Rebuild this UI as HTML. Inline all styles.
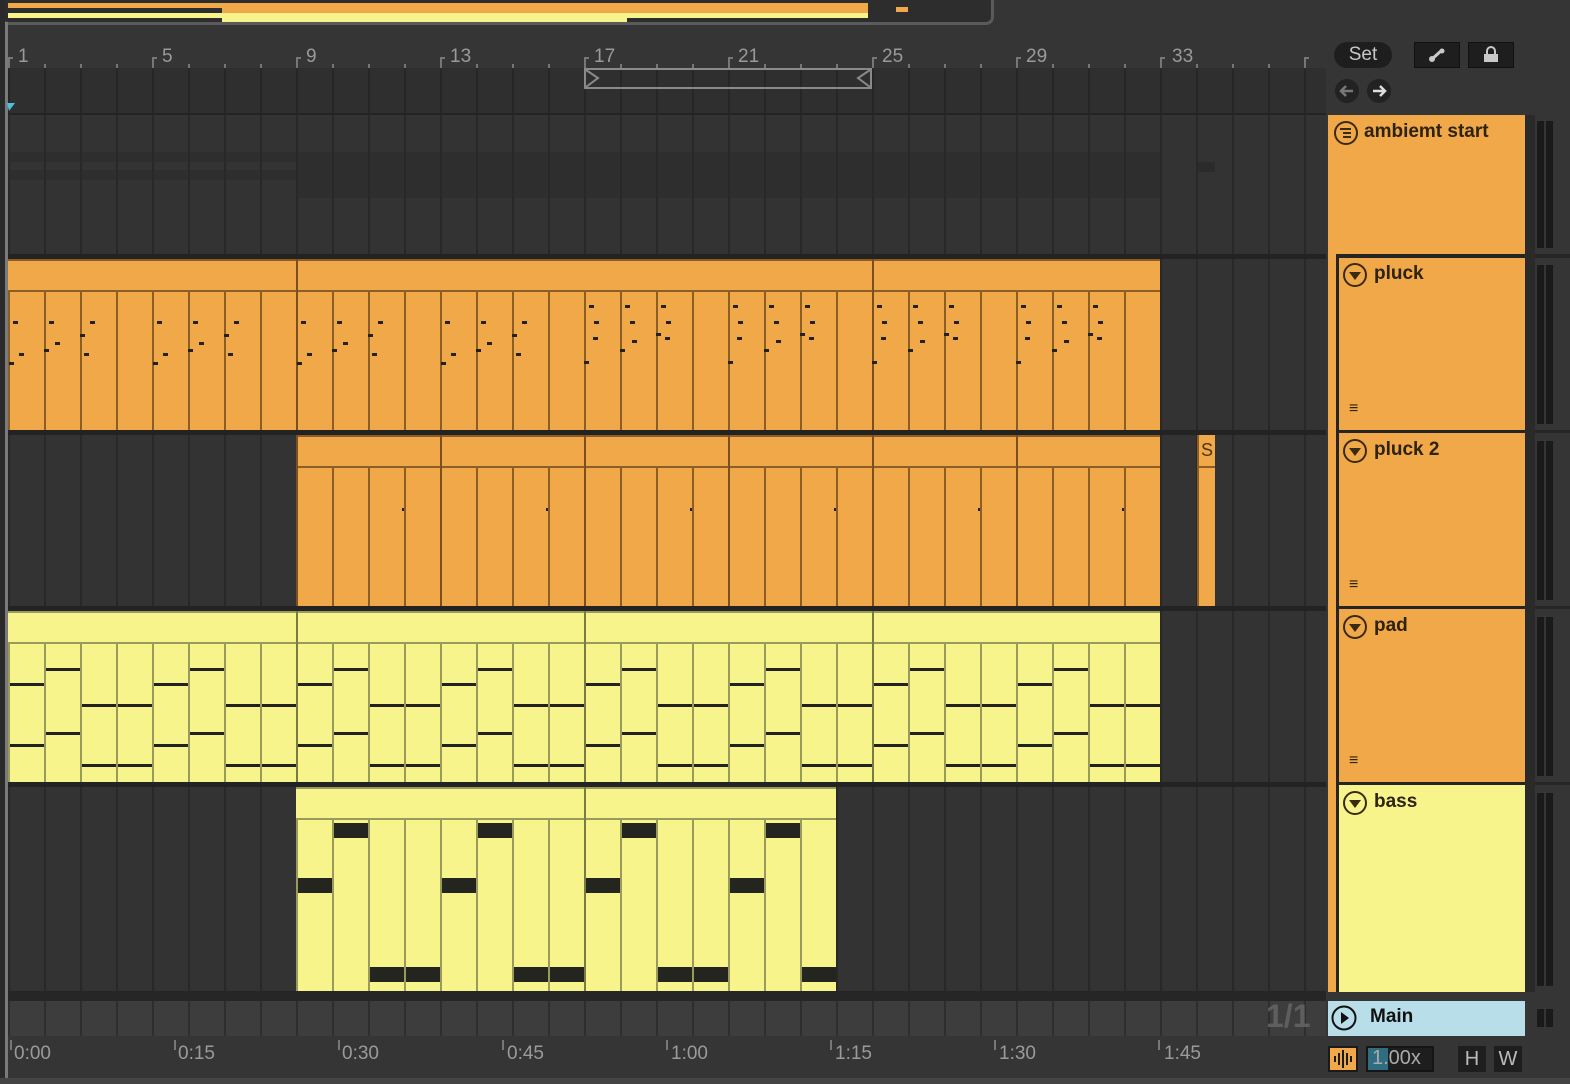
<!DOCTYPE html>
<html><head><meta charset="utf-8"><style>
*{margin:0;padding:0;box-sizing:border-box}
body{width:1570px;height:1084px;background:#353535;position:relative;overflow:hidden;font-family:"Liberation Sans",sans-serif}
.a{position:absolute}
.t{position:absolute;font-size:19px;color:#9a9a9a}
.hd{position:absolute;font-weight:bold;font-size:19px;color:#2e2210}
.ic{position:absolute;width:24px;height:24px;border:2px solid #3a2a10;border-radius:50%}
</style></head><body>
<div id="root"></div>
<div class="a" style="left:0;top:0;width:994px;height:25px;border:3px solid #5a5a5a;border-top:none;border-radius:0 0 8px 8px;background:#2d2d2d"></div>
<div class="a" style="left:8px;top:3px;width:860px;height:5px;background:#f0a848"></div>
<div class="a" style="left:222px;top:8px;width:646px;height:5px;background:#f0a848"></div>
<div class="a" style="left:8px;top:13px;width:860px;height:5px;background:#f7f48c"></div>
<div class="a" style="left:222px;top:18px;width:405px;height:4px;background:#f7f48c"></div>
<div class="a" style="left:896px;top:7px;width:12px;height:5px;background:#f0a848"></div>
<div class="a" style="left:0;top:0;width:5px;height:1084px;background:#2a2a2a"></div>
<div class="a" style="left:5px;top:22px;width:3px;height:1060px;background:#7a7a7a"></div>
<div class="t" style="left:18px;top:46px">1</div>
<div class="t" style="left:162px;top:46px">5</div>
<div class="t" style="left:306px;top:46px">9</div>
<div class="t" style="left:450px;top:46px">13</div>
<div class="t" style="left:594px;top:46px">17</div>
<div class="t" style="left:738px;top:46px">21</div>
<div class="t" style="left:882px;top:46px">25</div>
<div class="t" style="left:1026px;top:46px">29</div>
<div class="t" style="left:1172px;top:46px">33</div>
<div class="a" style="left:584px;top:68px;width:288px;height:21px;border:2px solid #8a8a8a"></div>
<svg class="a" style="left:584px;top:68px" width="288" height="21"><path d="M2 2 L14 10 L2 19" fill="none" stroke="#8a8a8a" stroke-width="2"/><path d="M286 2 L274 10 L286 19" fill="none" stroke="#8a8a8a" stroke-width="2"/></svg>
<svg class="a" style="left:7px;top:103px" width="10" height="10"><path d="M0 0 L8 0 L2 8Z" fill="#4cc0d8"/></svg>
<div class="a" style="left:1334px;top:42px;width:58px;height:26px;border-radius:13px;background:#1e1e1e;color:#c8c8c8;font-size:19px;text-align:center;line-height:26px">Set</div>
<div class="a" style="left:1414px;top:42px;width:46px;height:26px;background:#1e1e1e;border:1px solid #111"></div>
<svg class="a" style="left:1428px;top:47px" width="18" height="16"><path d="M3 13 L14 3" stroke="#c8c8c8" stroke-width="3"/><circle cx="4" cy="12" r="3" fill="#c8c8c8"/><circle cx="14" cy="4" r="2.5" fill="#c8c8c8"/></svg>
<div class="a" style="left:1468px;top:42px;width:46px;height:26px;background:#1e1e1e;border:1px solid #111"></div>
<svg class="a" style="left:1482px;top:46px" width="18" height="18"><path d="M5 8 V5 a4 4 0 0 1 8 0 V8" fill="none" stroke="#c8c8c8" stroke-width="2"/><rect x="2" y="8" width="14" height="8" fill="#c8c8c8"/></svg>
<svg class="a" style="left:1334px;top:78px" width="60" height="26"><circle cx="13" cy="13" r="12" fill="#222"/><path d="M19 13 H8 M12 8 L7 13 L12 18" stroke="#777" stroke-width="2.5" fill="none"/><circle cx="45" cy="13" r="12" fill="#222"/><path d="M39 13 H50 M46 8 L51 13 L46 18" stroke="#ddd" stroke-width="2.5" fill="none"/></svg>

<div class="a" style="left:1328px;top:115px;width:197px;height:877px;background:#f0a848"></div>
<div class="ic" style="left:1334px;top:121px"></div>
<svg class="a" style="left:1334px;top:121px" width="24" height="24"><path d="M6 8 H17 M9 12 H17 M9 16 H17" stroke="#3a2a10" stroke-width="2"/></svg>
<div class="hd" style="left:1364px;top:121px">ambiemt start</div>
<div class="a" style="left:1336px;top:254px;width:189px;height:4px;background:#252525"></div>
<div class="a" style="left:1336px;top:254px;width:3px;height:738px;background:#252525"></div>
<div class="a" style="left:1336px;top:430px;width:189px;height:3px;background:#252525"></div>
<div class="a" style="left:1336px;top:606px;width:189px;height:3px;background:#252525"></div>
<div class="a" style="left:1336px;top:782px;width:189px;height:3px;background:#252525"></div>
<div class="a" style="left:1339px;top:785px;width:186px;height:207px;background:#f7f48c"></div>
<div class="ic" style="left:1343px;top:263px"></div><div class="hd" style="left:1374px;top:263px">pluck</div>
<div class="ic" style="left:1343px;top:439px"></div><div class="hd" style="left:1374px;top:439px">pluck 2</div>
<div class="ic" style="left:1343px;top:615px"></div><div class="hd" style="left:1374px;top:615px">pad</div>
<div class="ic" style="left:1343px;top:791px"></div><div class="hd" style="left:1374px;top:791px">bass</div>
<svg class="a" style="left:1343px;top:263px" width="24" height="560">
<path d="M6 9 H18 L12 17Z M6 185 H18 L12 193Z M6 361 H18 L12 369Z M6 537 H18 L12 545Z" fill="#3a2a10"/></svg>
<div class="hd" style="left:1349px;top:400px;font-size:16px">≡</div>
<div class="hd" style="left:1349px;top:576px;font-size:16px">≡</div>
<div class="hd" style="left:1349px;top:752px;font-size:16px">≡</div>
<div class="a" style="left:1525px;top:115px;width:10px;height:877px;background:#2a2a2a"></div>
<div class="a" style="left:1328px;top:1001px;width:197px;height:35px;background:#b8dee9"></div>
<svg class="a" style="left:1331px;top:1005px" width="28" height="28"><circle cx="13" cy="13" r="11.5" fill="none" stroke="#111" stroke-width="2"/><path d="M10 7 L18 13 L10 19Z" fill="#111"/></svg>
<div class="a" style="left:1370px;top:1006px;font-size:19px;font-weight:bold;color:#111">Main</div>
<div class="a" style="left:1266px;top:998px;font-size:32px;font-weight:bold;color:#5e5e5e">1/1</div>
<div class="a" style="left:1328px;top:1046px;width:30px;height:26px;background:#f0a848;border:2px solid #1a1a1a"></div>
<svg class="a" style="left:1330px;top:1048px" width="26" height="22"><path d="M5 8v6M9 5v12M13 2v18M17 5v12M21 8v6" stroke="#1a1a1a" stroke-width="2"/></svg>
<div class="a" style="left:1366px;top:1046px;width:68px;height:26px;background:#1e1e1e;border:2px solid #151515"></div>
<div class="a" style="left:1368px;top:1048px;width:20px;height:22px;background:#2e6e80"></div>
<div class="a" style="left:1372px;top:1047px;font-size:20px;color:#aaa">1.00x</div>
<div class="a" style="left:1458px;top:1046px;width:28px;height:26px;background:#1e1e1e;color:#bbb;font-size:20px;text-align:center;line-height:26px">H</div>
<div class="a" style="left:1494px;top:1046px;width:28px;height:26px;background:#1e1e1e;color:#bbb;font-size:20px;text-align:center;line-height:26px">W</div>
<div class="t" style="left:14px;top:1043px">0:00</div>
<div class="t" style="left:178px;top:1043px">0:15</div>
<div class="t" style="left:342px;top:1043px">0:30</div>
<div class="t" style="left:507px;top:1043px">0:45</div>
<div class="t" style="left:671px;top:1043px">1:00</div>
<div class="t" style="left:835px;top:1043px">1:15</div>
<div class="t" style="left:999px;top:1043px">1:30</div>
<div class="t" style="left:1164px;top:1043px">1:45</div>
<div class="a" style="left:0;top:1078px;width:1570px;height:6px;background:#444"></div>
<script>
var R=document.getElementById('root'),h='';
function r(x,y,w,hh,c){h+='<div class="a" style="left:'+x+'px;top:'+y+'px;width:'+w+'px;height:'+hh+'px;background:'+c+'"></div>';}
r(8,68,1318,45,'#2f2f2f');
r(8,113,1318,888,'#232323');
var rows=[[115,139],[259,171],[435,171],[611,171],[787,205]];
rows.forEach(function(q){r(8,q[0],1318,q[1],'#333333');});
r(8,152,1152,10,'#2e2e2e');r(296,162,864,36,'#2e2e2e');r(8,170,288,10,'#2e2e2e');r(1197,162,18,10,'#2b2b2b');
r(8,1001,1318,35,'#3d3d3d');
for(var x=8;x<1326;x+=36){r(x,68,2,45,'#262626');rows.forEach(function(q){r(x,q[0],2,q[1],'#282828');});r(x,1001,2,35,'#2e2e2e');}
for(var k=0;k<37;k++){var xx=8+k*36;r(xx,(k%4==0)?57:64,2,(k%4==0)?11:4,'#777');if(k%4==0)r(xx,57,5,2,'#777');}
for(var k=0;k<8;k++){r(10+k*164,1040,2,10,'#777');}
function clip(x0,x1,y,hh,c,line){r(x0,y,x1-x0,hh,c);r(x0,y,x1-x0,2,line);r(x0,y+31,x1-x0,2,line);
 for(var x=x0;x<x1;x+=36)r(x,y+33,2,hh-33,line);}
clip(8,1160,259,171,'#f0a848','#8a5e24');
[296,872].forEach(function(x){r(x,259,2,171,'#7a5020');});
var P=[[[5,321],[11,353],[1,362]],[[5,321],[11,342],[0,349]],[[10,321],[0,334],[4,353]],[]];
var P2=[[[5,305],[10,321],[0,361],[9,337]],[[5,305],[10,321],[0,349],[12,340]],[[5,305],[10,321],[0,333],[9,337]],[]];
for(var b=0;b<32;b++){var bx=8+b*36,pp=(b>=16?P2:P)[b%4];pp.forEach(function(n){r(bx+n[0],n[1],5,3,'#222');});}
clip(296,1160,435,171,'#f0a848','#8a5e24');
for(var x=296;x<1160;x+=144)r(x,435,2,171,'#7a5020');
for(var x=402;x<1160;x+=144)r(x,508,2,3,'#222');
r(1197,435,18,171,'#f0a848');r(1197,435,2,171,'#8a5e24');r(1197,466,18,2,'#8a5e24');
h+='<div class="a" style="left:1201px;top:440px;font-size:18px;color:#4a3516">S</div>';
clip(8,1160,611,171,'#f7f48c','#9a9a5a');
[296,584,872].forEach(function(x){r(x,611,2,171,'#7a7a45');});
var PD=[[683,744],[668,732],[704,764],[704,764]];
for(var b=0;b<32;b++){var bx=8+b*36;PD[b%4].forEach(function(y){r(bx+2,y,34,3,'#222');});}
clip(296,836,787,205,'#f7f48c','#9a9a5a');r(584,787,2,205,'#7a7a45');
var BS=[878,823,967,967];
for(var b=0;b<15;b++){var bx=296+b*36;r(bx+2,BS[b%4],34,15,'#252520');}
r(8,991,1318,10,'#262626');
[[115,139],[259,171],[435,171],[611,171],[787,205],[1003,30]].forEach(function(q){r(1537,q[0]+6,7,q[1]-12,'#1a1a1a');r(1546,q[0]+6,7,q[1]-12,'#1a1a1a');});
r(1526,254,44,4,'#252525');r(1526,430,44,3,'#252525');r(1526,606,44,3,'#252525');r(1526,782,44,3,'#252525');
R.innerHTML=h;
</script>
</body></html>
